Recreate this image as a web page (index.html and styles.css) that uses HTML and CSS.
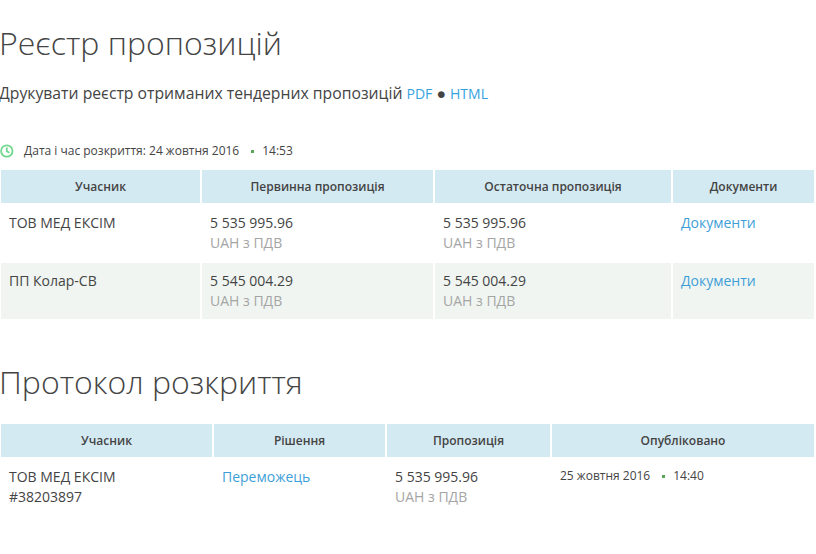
FILE: index.html
```html
<!DOCTYPE html>
<html lang="uk">
<head>
<meta charset="utf-8">
<title>Реєстр пропозицій</title>
<link rel="stylesheet" href="styles.css">
</head>
<body>
<h1 class="title">Реєстр пропозицій</h1>
<p class="print">Друкувати реєстр отриманих тендерних пропозицій <a href="#">PDF</a> ● <a href="#">HTML</a></p>
<div class="opened">
  <svg class="clock" width="14" height="14" viewBox="0 0 14 14" fill="none" stroke="#6fd88c" stroke-width="1.8"><circle cx="6.8" cy="7" r="5.7"/><path d="M6.8 3.4V7.3L9.4 8.8"/></svg>
  <span>Дата і час розкриття: 24 жовтня 2016</span><i class="dot"></i><span>14:53</span>
</div>
<table class="grid bids">
  <colgroup><col class="b1"><col class="b2"><col class="b3"><col class="b4"></colgroup>
  <thead><tr><th>Учасник</th><th>Первинна пропозиція</th><th>Остаточна пропозиція</th><th>Документи</th></tr></thead>
  <tbody>
    <tr><td>ТОВ МЕД ЕКСІМ</td><td>5 535 995.96<br><span class="muted">UAH з ПДВ</span></td><td>5 535 995.96<br><span class="muted">UAH з ПДВ</span></td><td><a href="#">Документи</a></td></tr>
    <tr class="alt"><td>ПП Колар-СВ</td><td>5 545 004.29<br><span class="muted">UAH з ПДВ</span></td><td>5 545 004.29<br><span class="muted">UAH з ПДВ</span></td><td><a href="#">Документи</a></td></tr>
  </tbody>
</table>
<h1 class="title second">Протокол розкриття</h1>
<table class="grid protocol">
  <colgroup><col class="p1"><col class="p2"><col class="p3"><col class="p4"></colgroup>
  <thead><tr><th>Учасник</th><th>Рішення</th><th>Пропозиція</th><th>Опубліковано</th></tr></thead>
  <tbody>
    <tr><td>ТОВ МЕД ЕКСІМ<br>#38203897</td><td><a href="#">Переможець</a></td><td>5 535 995.96<br><span class="muted">UAH з ПДВ</span></td><td class="published"><span>25 жовтня 2016</span><i class="dot"></i><span>14:40</span></td></tr>
  </tbody>
</table>
</body>
</html>
```
FILE: styles.css
```css
html, body { margin: 0; padding: 0; background: #fff; }
body { width: 816px; font-family: "Open Sans", sans-serif; color: #444; font-size: 14px; line-height: 20px; overflow: hidden; }
a { color: #3e9fd8; text-decoration: none; }
.title { margin: 0 0 0 -1px; padding-top: 21px; font-size: 32px; line-height: 44px; font-weight: 300; color: #444; }
.print { margin: 18px 0 0 -1px; height: 20px; font-size: 15.75px; }
.print a { color: #34a3e0; font-size: 14px; }
.opened { display: flex; align-items: center; margin-top: 38px; height: 20px; font-size: 12px; }
.clock { margin-right: 10px; flex: none; }
.dot { display: inline-block; width: 3px; height: 3px; background: #5ba55b; margin: 1px 8px 0 12px; vertical-align: 2px; }
.grid { border-collapse: separate; border-spacing: 0; table-layout: fixed; margin: 9px 0 0 1px; width: 813px; }
.grid th { background: #d4eaf2; font-size: 12px; font-weight: 600; line-height: 18px; height: 33px; padding: 0; text-align: center; vertical-align: middle; border-left: 2px solid #fff; color: #444; }
.grid td { padding: 10px 8px 11px 8px; vertical-align: top; border-left: 2px solid #fff; }
.grid th:first-child, .grid td:first-child { border-left: 0; }
.bids tbody tr:first-child td { padding-bottom: 10px; }
.bids tbody tr.alt td { padding-bottom: 8px; padding-top: 8px; }
.alt td { background: #f0f5f1; }
.muted { color: #a5a5a5; }
.b1 { width: 199px; } .b2 { width: 233px; } .b3 { width: 238px; } .b4 { width: 143px; }
.p1 { width: 211px; } .p2 { width: 173px; } .p3 { width: 165px; } .p4 { width: 264px; }
.second { padding-top: 41px; }
.protocol { margin-top: 20px; }
.grid td.published { font-size: 12px; padding-top: 9px; }
```
